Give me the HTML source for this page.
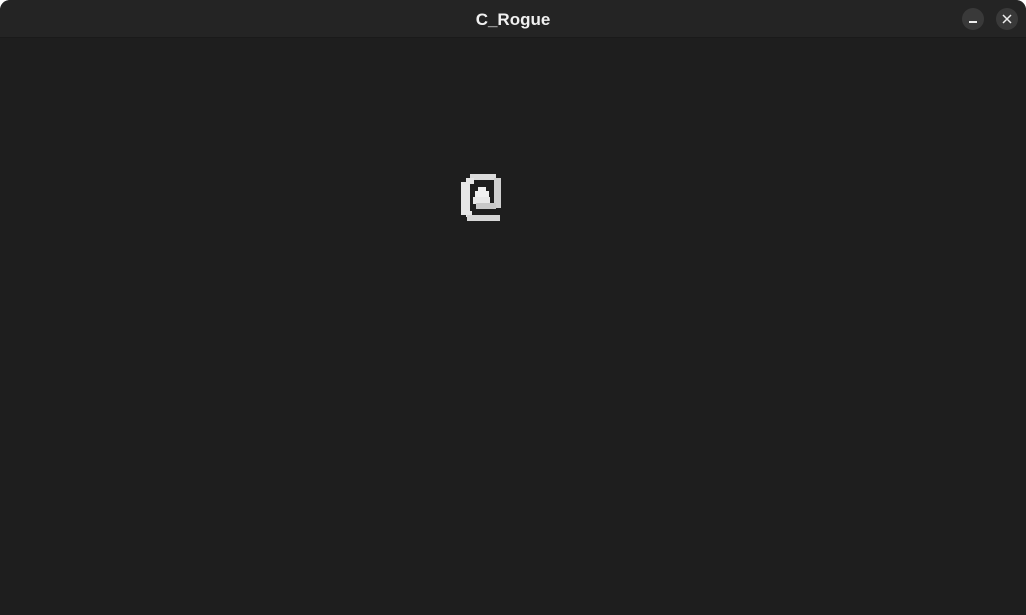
<!DOCTYPE html>
<html><head><style>
html,body{margin:0;padding:0;background:#fff;}
.win{position:absolute;left:0;top:0;width:1026px;height:615px;background:#1e1e1e;border-radius:10px 10px 0 0;overflow:hidden;}
.bar{position:absolute;left:0;top:0;width:1026px;height:37px;background:#242424;border-bottom:1px solid #1a1a1a;}
.title{position:absolute;left:0;width:1026px;top:10px;text-align:center;color:#f0f0f0;font:bold 17px "Liberation Sans",sans-serif;}
.btn{position:absolute;top:8px;width:22px;height:22px;border-radius:11px;background:#393939;}
</style></head><body>
<div class="win">
<div class="bar">
<div class="title">C_Rogue</div>
<div class="btn" style="left:962px"><div style="position:absolute;left:7px;top:13px;width:8px;height:1.5px;background:#eee"></div></div>
<div class="btn" style="left:996px"><svg width="22" height="22" style="position:absolute;left:0;top:0"><path d="M7 7L15 15M15 7L7 15" stroke="#eee" stroke-width="1.5"/></svg></div>
</div>
<svg style="position:absolute;left:0;top:0" width="1026" height="615">
<g fill="#e6e6e6">
<rect x="470" y="174" width="26" height="6" fill="#dcdcdc"/>
<rect x="466" y="178" width="8" height="6"/>
<rect x="461" y="182" width="9" height="33"/>
<rect x="466" y="211" width="6" height="6"/>
<rect x="467" y="215" width="33" height="6" fill="#d6d6d6"/>
<rect x="494" y="178" width="7" height="30" fill="#d0d0d0"/>
<rect x="478" y="187" width="8" height="5" fill="#f0f0f0"/>
<rect x="475" y="191" width="14" height="8" fill="#f0f0f0"/>
<rect x="473" y="197" width="17" height="7" fill="#e8e8e8"/>
<rect x="476" y="203" width="20" height="6" fill="#c8c8c8"/>
</g>
</svg>
</div>
</body></html>
